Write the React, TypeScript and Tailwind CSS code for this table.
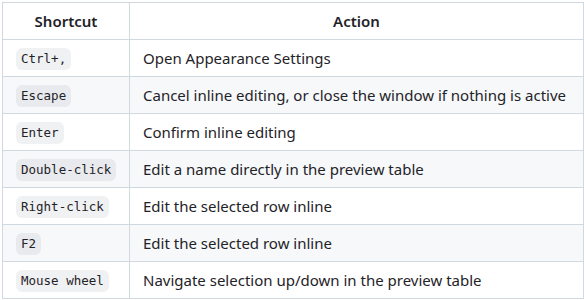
const rows: { key: string; action: string }[] = [
  { key: 'Ctrl+,', action: 'Open Appearance Settings' },
  { key: 'Escape', action: 'Cancel inline editing, or close the window if nothing is active' },
  { key: 'Enter', action: 'Confirm inline editing' },
  { key: 'Double-click', action: 'Edit a name directly in the preview table' },
  { key: 'Right-click', action: 'Edit the selected row inline' },
  { key: 'F2', action: 'Edit the selected row inline' },
  { key: 'Mouse wheel', action: 'Navigate selection up/down in the preview table' },
]

export default function App() {
  return (
    <div className="w-[584px] h-[300px] bg-white pl-[2px] pt-[2px] font-['Noto_Sans',sans-serif] text-[15px] text-[#1f2328]">
      <table className="border-collapse table-fixed w-[581px]">
        <colgroup>
          <col className="w-[127px]" />
          <col className="w-[454px]" />
        </colgroup>
        <thead>
          <tr className="bg-white">
            <th className="border border-[#d1d9e0] px-[13px] h-[37px] font-semibold text-center">Shortcut</th>
            <th className="border border-[#d1d9e0] px-[13px] h-[37px] font-semibold text-center">Action</th>
          </tr>
        </thead>
        <tbody>
          {rows.map((r, i) => (
            <tr key={r.key} className={i % 2 === 1 ? 'bg-[#f6f8fa]' : 'bg-white'}>
              <td className="border border-[#d1d9e0] px-[13px] h-[37px] whitespace-nowrap">
                <code className="inline-block h-[22px] leading-[22px] px-[5px] rounded-md bg-[#818b981f] font-['DejaVu_Sans_Mono',monospace] text-[12.5px] align-middle">
                  {r.key}
                </code>
              </td>
              <td className="border border-[#d1d9e0] px-[13px] h-[37px] whitespace-nowrap">{r.action}</td>
            </tr>
          ))}
        </tbody>
      </table>
    </div>
  )
}
